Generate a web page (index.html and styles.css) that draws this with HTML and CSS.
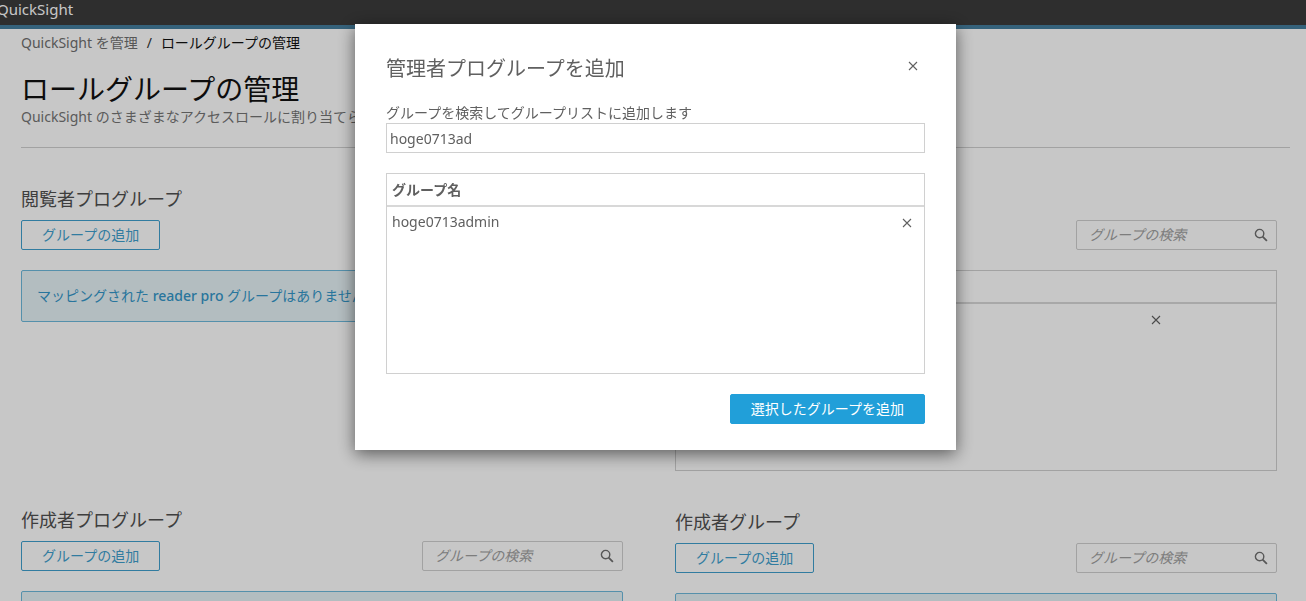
FILE: index.html
```html
<!DOCTYPE html>
<html lang="ja">
<head>
<meta charset="utf-8">
<meta name="viewport" content="width=device-width, initial-scale=1">
<title>ロールグループの管理</title>
<link rel="stylesheet" href="styles.css">
</head>
<body>
<svg class="sprite" aria-hidden="true">
  <symbol id="icon-close" viewBox="0 0 10 10"><path d="M1 1l8 8M9 1l-8 8" fill="none" stroke="currentColor" stroke-width="1.1"/></symbol>
  <symbol id="icon-search" viewBox="0 0 14 14"><circle cx="5.6" cy="5.6" r="4.2" fill="none" stroke="currentColor" stroke-width="1.4"/><path d="M8.6 8.6l4.3 4.3" fill="none" stroke="currentColor" stroke-width="1.8"/></symbol>
</svg>
<header class="topbar"><span class="brand">QuickSight</span></header>
<main class="page">
  <nav class="breadcrumb">
    <a href="#">QuickSight を管理</a><span class="separator">/</span><span class="current">ロールグループの管理</span>
  </nav>
  <div class="intro">
    <h1>ロールグループの管理</h1>
    <p>QuickSight のさまざまなアクセスロールに割り当てら</p>
  </div>
  <div class="columns">
    <div class="column">
      <section class="role">
        <h2>閲覧者プログループ</h2>
        <div class="toolbar"><button class="button" type="button">グループの追加</button></div>
        <p class="notice">マッピングされた <span class="strong">reader pro</span> グループはありません</p>
      </section>
      <section class="role">
        <h2>作成者プログループ</h2>
        <div class="toolbar">
          <button class="button" type="button">グループの追加</button>
          <label class="search"><input type="search" placeholder="グループの検索" aria-label="グループの検索"><svg class="search-icon"><use href="#icon-search"/></svg></label>
        </div>
        <p class="notice"></p>
      </section>
    </div>
    <div class="column">
      <section class="role">
        <div class="heading-space"></div>
        <div class="toolbar">
          <label class="search"><input type="search" placeholder="グループの検索" aria-label="グループの検索"><svg class="search-icon"><use href="#icon-search"/></svg></label>
        </div>
        <div class="table-box">
          <table>
            <thead><tr><th class="name"></th><th class="action"></th></tr></thead>
            <tbody><tr><td></td><td class="action"><button class="icon-button" type="button" aria-label="削除"><svg class="close-icon"><use href="#icon-close"/></svg></button></td></tr></tbody>
          </table>
        </div>
      </section>
      <section class="role">
        <h2>作成者グループ</h2>
        <div class="toolbar">
          <button class="button" type="button">グループの追加</button>
          <label class="search"><input type="search" placeholder="グループの検索" aria-label="グループの検索"><svg class="search-icon"><use href="#icon-search"/></svg></label>
        </div>
        <p class="notice"></p>
      </section>
    </div>
  </div>
</main>
<div class="overlay">
  <div class="modal" role="dialog" aria-modal="true" aria-labelledby="modal-title">
    <div class="modal-header">
      <h2 id="modal-title">管理者プログループを追加</h2>
      <button class="icon-button" type="button" aria-label="閉じる"><svg class="close-icon"><use href="#icon-close"/></svg></button>
    </div>
    <label class="field-label" for="group-query">グループを検索してグループリストに追加します</label>
    <input class="field" id="group-query" type="text" value="hoge0713ad">
    <div class="table-box">
      <table>
        <thead><tr><th class="name">グループ名</th><th class="remove"></th></tr></thead>
        <tbody><tr><td>hoge0713admin</td><td class="remove"><button class="icon-button" type="button" aria-label="削除"><svg class="close-icon"><use href="#icon-close"/></svg></button></td></tr></tbody>
      </table>
    </div>
    <div class="modal-footer"><button class="button primary" type="button">選択したグループを追加</button></div>
  </div>
</div>
</body>
</html>
```
FILE: styles.css
```css
* { box-sizing: border-box; }
html, body { height: 100%; }
body {
  margin: 0;
  overflow: hidden;
  background: #fff;
  color: #606060;
  font: 14px/20px "Noto Sans", "Noto Sans CJK JP", sans-serif;
}
h1, h2, p { margin: 0; font-weight: 400; }
button, input { font: inherit; color: inherit; }
.sprite { display: none; }

.topbar {
  height: 29px;
  background: #3b3b3b;
  border-bottom: 4px solid #457e9e;
  color: #fff;
}
.brand { display: block; text-indent: -3px; font-size: 15px; line-height: 19px; }

.page { padding: 4px 16px 0 21px; }
.breadcrumb { white-space: nowrap; }
.breadcrumb a { color: #707070; text-decoration: none; }
.separator { margin: 0 9px; color: #333; }
.current { color: #111; }
.intro {
  padding: 18px 0 20px;
  border-bottom: 1px solid #d0d0d0;
  color: #757575;
}
h1 { color: #111; font-size: 28px; line-height: 36px; }

.columns {
  display: grid;
  grid-template-columns: 1fr 1fr;
  gap: 52px;
  padding: 39px 13px 0 0;
}
.column { display: flex; flex-direction: column; gap: 39px; min-width: 0; }
.role { min-height: 282px; }
.role h2 { margin-bottom: 9px; color: #505050; font-size: 18px; line-height: 24px; }
.heading-space { height: 33px; }
.toolbar { display: flex; margin-bottom: 20px; }
.button {
  height: 30px;
  padding: 0 20px;
  border: 1px solid #3f9fce;
  border-radius: 2px;
  background: transparent;
  color: #3f9fce;
}
.search {
  display: flex;
  align-items: center;
  width: 201px;
  height: 30px;
  margin-left: auto;
  padding: 0 8px 0 12px;
  border: 1px solid #d0d0d0;
  border-radius: 2px;
}
.search input {
  flex: 1;
  min-width: 0;
  padding: 0;
  border: 0;
  outline: 0;
  background: transparent;
}
.search input::placeholder { color: #a0a0a0; font-style: italic; opacity: 1; }
.search-icon { width: 14px; height: 14px; color: #707070; }
.notice {
  min-height: 52px;
  padding: 15px;
  border: 1px solid #6db9dc;
  border-radius: 2px;
  background: #e6f2f6;
  color: #3497c9;
  white-space: nowrap;
}
.strong { font-weight: 500; }

.table-box { height: 201px; border: 1px solid #d0d0d0; }
table { width: 100%; border-collapse: collapse; table-layout: fixed; }
th, td { padding: 0 5px; text-align: left; }
th { height: 32px; border-bottom: 2px solid #d8d8d8; font-weight: 600; }
td { height: 30px; }
.action { width: 40%; text-align: center; }
.remove { width: 34px; text-align: center; }
.icon-button {
  display: inline-flex;
  padding: 2px;
  border: 0;
  background: transparent;
  color: #606060;
  vertical-align: middle;
}
.close-icon { width: 10px; height: 10px; }

.overlay {
  position: fixed;
  inset: 0;
  display: flex;
  justify-content: center;
  align-items: flex-start;
  padding-top: 24px;
  background: rgba(0, 0, 0, .22);
}
.modal {
  width: 601px;
  max-width: 100%;
  margin-left: 5px;
  padding: 30px 30px 25px;
  border: 1px solid #fff;
  background: #fff;
  box-shadow: 0 4px 16px rgba(0, 0, 0, .55);
}
.modal-header {
  display: flex;
  justify-content: space-between;
  margin-bottom: 20px;
  padding-right: 5px;
}
.modal-header h2 { font-size: 20px; line-height: 28px; }
.modal-header .icon-button { margin-top: 4px; align-self: flex-start; }
.field-label { display: block; }
.field {
  display: block;
  width: 100%;
  height: 30px;
  margin-bottom: 20px;
  padding: 0 3px;
  border: 1px solid #d0d0d0;
  outline: 0;
}
.modal-footer { display: flex; justify-content: flex-end; padding-top: 20px; }
.primary { border-color: #219fd9; background: #219fd9; color: #fff; }
```
